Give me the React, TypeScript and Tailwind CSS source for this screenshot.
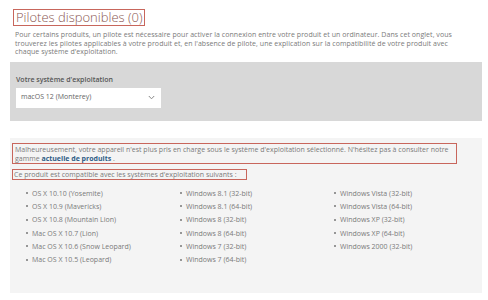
import React from 'react';

const macList = [
  'OS X 10.10 (Yosemite)',
  'OS X 10.9 (Mavericks)',
  'OS X 10.8 (Mountain Lion)',
  'Mac OS X 10.7 (Lion)',
  'Mac OS X 10.6 (Snow Leopard)',
  'Mac OS X 10.5 (Leopard)',
];

const winList = [
  'Windows 8.1 (32-bit)',
  'Windows 8.1 (64-bit)',
  'Windows 8 (32-bit)',
  'Windows 8 (64-bit)',
  'Windows 7 (32-bit)',
  'Windows 7 (64-bit)',
];

const oldList = [
  'Windows Vista (32-bit)',
  'Windows Vista (64-bit)',
  'Windows XP (32-bit)',
  'Windows XP (64-bit)',
  'Windows 2000 (32-bit)',
];

const OsColumn: React.FC<{ items: string[]; className?: string }> = ({ items, className }) => (
  <ul className={className}>
    {items.map((item) => (
      <li key={item} className="flex items-center h-[13.3px]">
        <span className="w-[2px] h-[2px] rounded-full bg-[#777] mr-[4px]"></span>
        <span>{item}</span>
      </li>
    ))}
  </ul>
);

export default function App() {
  return (
    <div className="w-[488px] h-[300px] bg-white overflow-hidden text-[#7a7a7a] font-['Open_Sans',sans-serif]">
      <div className="flex pl-[13px] pt-[9px]">
        <h2 className="border border-[#c8665c] px-[2px] h-[17px] leading-[15px] text-[13px] font-light text-[#8a5550]">
          Pilotes disponibles (0)
        </h2>
      </div>
      <p className="pl-[15px] pr-[20px] mt-[5px] text-[7px] leading-[8.5px] tracking-[0.05px]">
        Pour certains produits, un pilote est nécessaire pour activer la connexion entre votre produit et un ordinateur. Dans cet onglet, vous trouverez les pilotes applicables à votre produit et, en l'absence de pilote, une explication sur la compatibilité de votre produit avec chaque système d'exploitation.
      </p>

      <div className="mx-[10px] w-[472px] mt-[5px] h-[59px] bg-[#d8d8d8] pl-[6px] pt-[13px]">
        <div className="text-[7px] leading-[9px] font-semibold text-[#555]">Votre système d'exploitation</div>
        <div className="mt-[4px] w-[145px] h-[20px] bg-white flex items-center justify-between pl-[5px] pr-[6px] text-[7px] text-[#666]">
          <span>macOS 12 (Monterey)</span>
          <svg width="7" height="5" viewBox="0 0 7 5" fill="none" stroke="#888" strokeWidth="1">
            <path d="M0.8 1 L3.5 3.8 L6.2 1" />
          </svg>
        </div>
      </div>

      <div className="mx-[10px] w-[472px] mt-[17px] h-[155px] bg-[#f4f4f4] pt-[5px] pl-[2px]">
        <div className="w-[445px] h-[21px] border border-[#c8665c] px-[2px] pt-px text-[7px] leading-[9px]">
          <div>Malheureusement, votre appareil n'est plus pris en charge sous le système d'exploitation sélectionné. N'hésitez pas à consulter notre</div>
          <div>
            <span>gamme </span>
            <span className="font-bold text-[#2f5c85]">actuelle de produits</span>
            <span> .</span>
          </div>
        </div>
        <div className="mt-[5px] w-[235px] h-[11px] border border-[#c8665c] px-[1px] text-[7px] leading-[9px] whitespace-nowrap">
          Ce produit est compatible avec les systèmes d'exploitation suivants :
        </div>
        <div className="flex mt-[7px] text-[7px] leading-[9px]">
          <OsColumn items={macList} className="ml-[14px] w-[154px]" />
          <OsColumn items={winList} className="w-[154px]" />
          <OsColumn items={oldList} className="" />
        </div>
      </div>
    </div>
  );
}
